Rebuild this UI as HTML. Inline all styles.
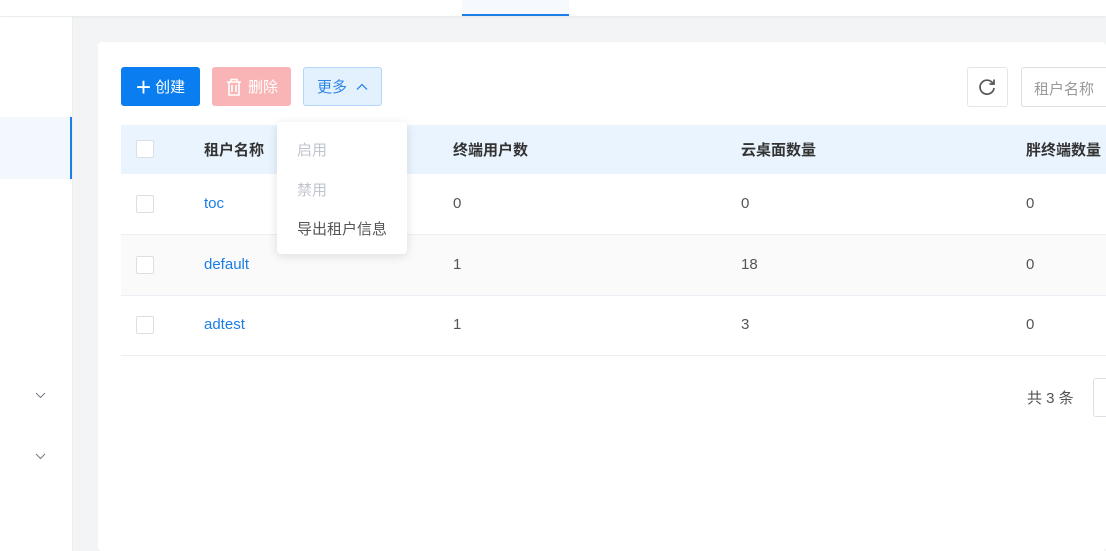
<!DOCTYPE html>
<html><head><meta charset="utf-8"><style>
*{margin:0;padding:0;box-sizing:border-box}
html,body{width:1106px;height:551px;overflow:hidden}
body{background:#f3f4f5;font-family:"Liberation Sans","Noto Sans CJK SC",sans-serif;font-size:15px;color:#333;position:relative}
.abs{position:absolute}
.top{left:0;top:0;width:1106px;height:16px;background:#fff;box-shadow:0 1px 3px rgba(0,0,0,.06)}
.side{left:0;top:17px;width:73px;height:534px;background:#fff;border-right:1px solid #eceef0}
.card{left:98px;top:42px;width:1008px;height:509px;background:#fff;border-radius:4px}
.btn{top:67px;height:39px;border-radius:3px;display:flex;align-items:center;justify-content:center;font-size:15px}
.th{top:125px;height:49px;left:121px;width:985px;background:#eaf4fe}
.cb{width:18px;height:18px;border:1px solid #dcdfe6;border-radius:2px;background:#fff;left:136px}
.t{font-size:15px}
.h{font-weight:bold;color:#333}
.lnk{color:#1a7ee6}
.row{left:121px;width:985px;height:1px;background:#ebeef5}
</style></head><body>
<div class="abs top"></div>
<div class="abs" style="left:462px;top:0;width:107px;height:16px;background:#f6f9fe;border-bottom:2px solid #1a7ee6"></div>
<div class="abs side"></div>
<div class="abs" style="left:0;top:117px;width:72px;height:62px;background:#f3f8fe;border-right:2px solid #1a7ee6"></div>
<svg class="abs" style="left:35px;top:392px" width="11" height="7"><path d="M1 1l4.5 4.5L10 1" fill="none" stroke="#778" stroke-width="1"/></svg>
<svg class="abs" style="left:35px;top:453px" width="11" height="7"><path d="M1 1l4.5 4.5L10 1" fill="none" stroke="#778" stroke-width="1"/></svg>
<div class="abs card"></div>
<div class="abs btn" style="left:121px;width:79px;background:#0a7ef0;color:#fff"><span style="font-size:26px;font-weight:300;margin-right:4px;line-height:1">+</span>创建</div>
<div class="abs btn" style="left:212px;width:79px;background:#f9b5b5;color:#fff">
<svg width="18" height="20" style="margin-right:5px"><path d="M2 5h14M6 5V2.5h6V5M4 5v13h10V5M7 8v7M11 8v7" fill="none" stroke="#fff" stroke-width="1.6"/></svg>删除</div>
<div class="abs btn" style="left:303px;width:79px;background:#e3f0fd;border:1px solid #b3d6fa;color:#2e86e8">更多<svg width="12" height="8" style="margin-left:9px"><path d="M1 6.5L6 1.5l5 5" fill="none" stroke="#2e86e8" stroke-width="1.3"/></svg></div>
<div class="abs" style="left:967px;top:67px;width:41px;height:40px;border:1px solid #e2e5ea;border-radius:3px;background:#fff"></div>
<svg class="abs" style="left:977px;top:77px" width="20" height="20"><path d="M16 6.5A7 7 0 1 0 17 11" fill="none" stroke="#555" stroke-width="1.7"/><path d="M17 2.5v4.5h-4.5" fill="none" stroke="#555" stroke-width="1.7"/></svg>
<div class="abs" style="left:1021px;top:67px;width:100px;height:40px;border:1px solid #dcdfe6;border-radius:3px;background:#fff;color:#999;padding:10px 0 0 12px">租户名称</div>
<div class="abs th"></div>
<div class="abs cb" style="top:140px"></div>
<div class="abs t h" style="left:204px;top:139px">租户名称</div>
<div class="abs t h" style="left:453px;top:139px">终端用户数</div>
<div class="abs t h" style="left:741px;top:139px">云桌面数量</div>
<div class="abs t h" style="left:1026px;top:139px">胖终端数量</div>
<div class="abs" style="left:121px;top:235px;width:985px;height:60px;background:#fafafa"></div>
<div class="abs row" style="top:234px"></div>
<div class="abs row" style="top:295px"></div>
<div class="abs row" style="top:355px"></div>
<div class="abs cb" style="top:195px"></div>
<div class="abs cb" style="top:256px"></div>
<div class="abs cb" style="top:316px"></div>
<div class="abs t lnk" style="left:204px;top:195px">toc</div>
<div class="abs t" style="left:453px;top:195px;color:#555">0</div>
<div class="abs t" style="left:741px;top:195px;color:#555">0</div>
<div class="abs t" style="left:1026px;top:195px;color:#555">0</div>
<div class="abs t lnk" style="left:204px;top:256px">default</div>
<div class="abs t" style="left:453px;top:256px;color:#555">1</div>
<div class="abs t" style="left:741px;top:256px;color:#555">18</div>
<div class="abs t" style="left:1026px;top:256px;color:#555">0</div>
<div class="abs t lnk" style="left:204px;top:316px">adtest</div>
<div class="abs t" style="left:453px;top:316px;color:#555">1</div>
<div class="abs t" style="left:741px;top:316px;color:#555">3</div>
<div class="abs t" style="left:1026px;top:316px;color:#555">0</div>
<div class="abs" style="left:277px;top:122px;width:130px;height:132px;background:#fff;border-radius:4px;box-shadow:0 2px 10px rgba(0,0,0,.12)"></div>
<div class="abs t" style="left:297px;top:139px;color:#c0c4cc">启用</div>
<div class="abs t" style="left:297px;top:179px;color:#c0c4cc">禁用</div>
<div class="abs t" style="left:297px;top:218px;color:#555">导出租户信息</div>
<div class="abs t" style="left:1027px;top:387px;color:#555">共 3 条</div>
<div class="abs" style="left:1093px;top:378px;width:30px;height:39px;border:1px solid #dcdfe6;border-radius:3px;background:#fff"></div>
</body></html>
